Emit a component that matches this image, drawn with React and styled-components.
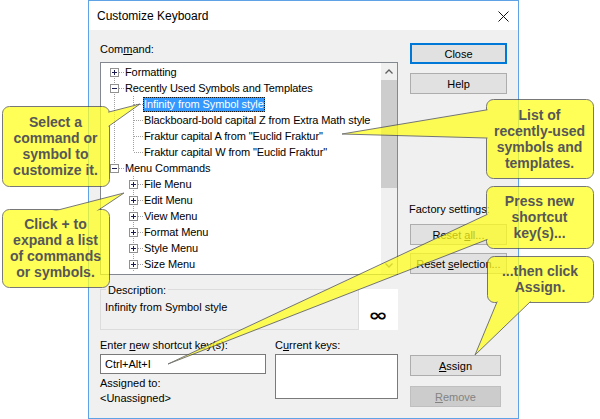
import React from 'react';
import styled, { createGlobalStyle } from 'styled-components';

const GlobalStyle = createGlobalStyle`
  html, body { margin: 0; padding: 0; background: #ffffff; }
  body { font-family: "Liberation Sans", Arial, sans-serif; font-size: 11px; color: #000; }
  * { box-sizing: border-box; }
`;

const Page = styled.div`
  position: relative;
  width: 600px;
  height: 419px;
  overflow: hidden;
  background: #ffffff;
`;

const Dialog = styled.div`
  margin-left: 88px;
  width: 431px;
  height: 419px;
  border: 1px solid #5fa3e6;
  display: flex;
  flex-direction: column;
  background: #f0f0f0;
`;

const TitleBar = styled.div`
  height: 29px;
  flex: none;
  background: #ffffff;
  display: flex;
  align-items: center;
  justify-content: space-between;
  padding: 1px 9px 0 8px;
  font-size: 12px;
`;

const Body = styled.div`
  flex: 1;
  display: flex;
  gap: 12px;
  padding: 0 10px 0 11px;
`;

const LeftCol = styled.div`
  width: 298px;
  display: flex;
  flex-direction: column;
`;

const RightCol = styled.div`
  width: 97px;
  display: flex;
  flex-direction: column;
  align-items: flex-start;
`;

const Label = styled.div`
  line-height: ${p => p.$lh || 14}px;
  margin-top: ${p => p.$mt || 0}px;
  margin-left: ${p => p.$ml || 0}px;
  white-space: nowrap;
`;

const TreeBox = styled.div`
  margin-top: 6px;
  height: 213px;
  border: 1px solid #828790;
  background: #ffffff;
  display: flex;
`;

const TreeContent = styled.div`
  flex: 1;
  overflow: hidden;
  padding: 1px 0 0 4px;
`;

const Row = styled.div`
  height: 16px;
  display: flex;
  align-items: center;
`;

const RowLabel = styled.span`
  line-height: 15px;
  height: 15px;
  padding: 0 1px;
  white-space: nowrap;
  letter-spacing: -0.1px;
  background: ${p => (p.$selected ? '#3399ff' : 'transparent')};
  color: ${p => (p.$selected ? '#ffffff' : '#000000')};
  outline: ${p => (p.$selected ? '1px dotted #1a1a1a' : 'none')};
  outline-offset: -1px;
`;

const Scroll = styled.div`
  width: 16px;
  display: flex;
  flex-direction: column;
  background: #f0f0f0;
`;

const ScrollBtn = styled.div`
  height: 17px;
  display: flex;
  align-items: center;
  justify-content: center;
`;

const Thumb = styled.div`
  height: 108px;
  background: #cdcdcd;
`;

const ScrollSpacer = styled.div`
  flex: 1;
`;

const DescRow = styled.div`
  margin-top: 14px;
  height: 41px;
  display: flex;
`;

const Group = styled.div`
  position: relative;
  flex: 1;
  border: 1px solid #dcdcdc;
  padding: 10px 0 0 4px;
  line-height: 14px;
`;

const Legend = styled.span`
  position: absolute;
  top: -7px;
  left: 5px;
  padding: 0 2px;
  background: #f0f0f0;
  line-height: 14px;
`;

const Preview = styled.div`
  width: 39px;
  background: #ffffff;
  display: flex;
  justify-content: center;
  align-items: flex-end;
  padding-bottom: 10px;
`;

const Infinity = styled.span`
  font-family: "DejaVu Sans", sans-serif;
  font-weight: bold;
  font-size: 17px;
  line-height: 10px;
  transform: scaleX(1.4);
`;

const Bottom = styled.div`
  margin-top: 8px;
  display: grid;
  grid-template-columns: 166px 123px;
  column-gap: 9px;
`;

const Field = styled.div`
  display: flex;
  flex-direction: column;
`;

const Input = styled.div`
  margin-top: 2px;
  height: ${p => p.$h}px;
  border: 1px solid #7a7a7a;
  background: #ffffff;
  padding: 0 0 0 4px;
  line-height: 18px;
`;

const Button = styled.div`
  margin-top: ${p => p.$mt || 0}px;
  width: ${p => p.$w || 97}px;
  height: 21px;
  display: flex;
  align-items: center;
  justify-content: center;
  background: ${p => (p.$disabled ? '#cccccc' : '#e1e1e1')};
  color: ${p => (p.$disabled ? '#838383' : '#000000')};
  border: ${p => (p.$default ? '2px solid #0078d7' : p.$disabled ? '1px solid #bfbfbf' : '1px solid #adadad')};
  white-space: pre;
`;

const Overlay = styled.svg`
  position: absolute;
  left: 0;
  top: 0;
  pointer-events: none;
`;

const CalloutText = styled.div`
  position: absolute;
  left: ${p => p.$x}px;
  top: ${p => p.$y}px;
  width: ${p => p.$w}px;
  height: ${p => p.$h}px;
  display: flex;
  flex-direction: column;
  align-items: center;
  justify-content: center;
  font-family: "Liberation Sans", Arial, sans-serif;
  font-weight: bold;
  font-size: 14px;
  line-height: 16px;
  color: #575757;
  text-align: center;
  white-space: nowrap;
`;

const dot = '#a0a0a0';

function Cell({ up, down, h, box }) {
  return (
    <svg width="19" height="16" style={{ flex: 'none' }}>
      {up && <line x1="9.5" y1="0" x2="9.5" y2="8" stroke={dot} strokeDasharray="1 1" />}
      {down && <line x1="9.5" y1="8" x2="9.5" y2="16" stroke={dot} strokeDasharray="1 1" />}
      {h && <line x1="10" y1="8.5" x2="19" y2="8.5" stroke={dot} strokeDasharray="1 1" />}
      {box && (
        <g>
          <rect x="5.5" y="4.5" width="8" height="8" fill="#ffffff" stroke="#919191" />
          <line x1="7" y1="8.5" x2="12" y2="8.5" stroke="#1c1c50" />
          {box === '+' && <line x1="9.5" y1="6" x2="9.5" y2="11" stroke="#1c1c50" />}
        </g>
      )}
    </svg>
  );
}

const pass = { up: true, down: true };
const rows = [
  { label: 'Formatting', cells: [{ down: true, h: true, box: '+' }] },
  { label: 'Recently Used Symbols and Templates', cells: [{ up: true, down: true, h: true, box: '-' }] },
  { label: 'Infinity from Symbol style', selected: true, cells: [pass, { up: true, down: true, h: true }] },
  { label: 'Blackboard-bold capital Z from Extra Math style', cells: [pass, { up: true, down: true, h: true }] },
  { label: 'Fraktur capital A from "Euclid Fraktur"', cells: [pass, { up: true, down: true, h: true }] },
  { label: 'Fraktur capital W from "Euclid Fraktur"', cells: [pass, { up: true, h: true }] },
  { label: 'Menu Commands', cells: [{ up: true, h: true, box: '-' }] },
  { label: 'File Menu', cells: [{}, { up: true, down: true, h: true, box: '+' }] },
  { label: 'Edit Menu', cells: [{}, { up: true, down: true, h: true, box: '+' }] },
  { label: 'View Menu', cells: [{}, { up: true, down: true, h: true, box: '+' }] },
  { label: 'Format Menu', cells: [{}, { up: true, down: true, h: true, box: '+' }] },
  { label: 'Style Menu', cells: [{}, { up: true, down: true, h: true, box: '+' }] },
  { label: 'Size Menu', cells: [{}, { up: true, down: true, h: true, box: '+' }] },
];

const callouts = [
  { x: 2, y: 106, w: 107, h: 80, tip: [140, 104], a: [109, 112], b: [109, 126], lines: ['Select a', 'command or', 'symbol to', 'customize it.'] },
  { x: 2, y: 209, w: 107, h: 78, tip: [124, 193], a: [62, 209], b: [100, 209], lines: ['Click + to', 'expand a list', 'of commands', 'or symbols.'] },
  { x: 486, y: 99, w: 107, h: 79, tip: [342, 134], a: [486, 110], b: [486, 138], lines: ['List of', 'recently-used', 'symbols and', 'templates.'] },
  { x: 486, y: 186, w: 107, h: 62, tip: [168, 364], a: [486, 215], b: [486, 240], lines: ['Press new', 'shortcut', 'key(s)...'] },
  { x: 487, y: 256, w: 106, h: 46, tip: [475, 355], a: [497, 302], b: [530, 302], lines: ['...then click', 'Assign.'] },
];

function extend(p, t, d) {
  const dx = p[0] - t[0];
  const dy = p[1] - t[1];
  const len = Math.hypot(dx, dy);
  return [p[0] + (dx / len) * d, p[1] + (dy / len) * d];
}

function CalloutShape({ c }) {
  const a2 = extend(c.a, c.tip, 14);
  const b2 = extend(c.b, c.tip, 14);
  const pts = [c.tip, a2, b2].map(p => p.join(',')).join(' ');
  const fill = '#ffff1e';
  return (
    <g opacity="0.74">
      <rect x={c.x + 0.5} y={c.y + 0.5} width={c.w} height={c.h} rx="7" fill={fill} stroke="#4a4a4a" />
      <polygon points={pts} fill={fill} stroke="#4a4a4a" strokeLinejoin="miter" />
      <rect x={c.x + 1.5} y={c.y + 1.5} width={c.w - 2} height={c.h - 2} rx="6" fill={fill} />
    </g>
  );
}

export default function App() {
  return (
    <Page>
      <GlobalStyle />
      <Dialog>
        <TitleBar>
          <span>Customize Keyboard</span>
          <svg width="11" height="11">
            <line x1="0.5" y1="0.5" x2="10.5" y2="10.5" stroke="#111" />
            <line x1="10.5" y1="0.5" x2="0.5" y2="10.5" stroke="#111" />
          </svg>
        </TitleBar>
        <Body>
          <LeftCol>
            <Label $mt={12}>Com<u>m</u>and:</Label>
            <TreeBox>
              <TreeContent>
                {rows.map((r, i) => (
                  <Row key={i}>
                    {r.cells.map((c, j) => (
                      <Cell key={j} {...c} />
                    ))}
                    <RowLabel $selected={r.selected}>{r.label}</RowLabel>
                  </Row>
                ))}
              </TreeContent>
              <Scroll>
                <ScrollBtn>
                  <svg width="8" height="5">
                    <polyline points="0.5,4.5 4,1 7.5,4.5" fill="none" stroke="#606060" strokeWidth="1.3" />
                  </svg>
                </ScrollBtn>
                <Thumb />
                <ScrollSpacer />
                <ScrollBtn>
                  <svg width="8" height="5">
                    <polyline points="0.5,0.5 4,4 7.5,0.5" fill="none" stroke="#606060" strokeWidth="1.3" />
                  </svg>
                </ScrollBtn>
              </Scroll>
            </TreeBox>
            <DescRow>
              <Group>
                <Legend>Description:</Legend>
                Infinity from Symbol style
              </Group>
              <Preview>
                <Infinity>∞</Infinity>
              </Preview>
            </DescRow>
            <Bottom>
              <Field>
                <Label>Enter <u>n</u>ew shortcut key(s):</Label>
                <Input $h={20}>Ctrl+Alt+I</Input>
                <Label $lh={15} $mt={2}>Assigned to:</Label>
                <Label $lh={15}>&lt;Unassigned&gt;</Label>
              </Field>
              <Field>
                <Label>C<u>u</u>rrent keys:</Label>
                <Input $h={45} />
              </Field>
            </Bottom>
          </LeftCol>
          <RightCol>
            <Button $mt={13} $default><span>Close</span></Button>
            <Button $mt={9}><span>Help</span></Button>
            <Label $mt={108} $ml={-1}>Factory settings:</Label>
            <Button $mt={8}><span>Reset <u>a</u>ll...</span></Button>
            <Button $mt={8}><span>Reset <u>s</u>election...</span></Button>
            <Button $mt={81} $w={91}><span><u>A</u>ssign</span></Button>
            <Button $mt={10} $w={91} $disabled><span><u>R</u>emove</span></Button>
          </RightCol>
        </Body>
      </Dialog>
      <Overlay width="600" height="419">
        {callouts.map((c, i) => (
          <CalloutShape key={i} c={c} />
        ))}
      </Overlay>
      {callouts.map((c, i) => (
        <CalloutText key={i} $x={c.x} $y={c.y} $w={c.w} $h={c.h}>
          {c.lines.map((l, j) => (
            <div key={j}>{l}</div>
          ))}
        </CalloutText>
      ))}
    </Page>
  );
}
